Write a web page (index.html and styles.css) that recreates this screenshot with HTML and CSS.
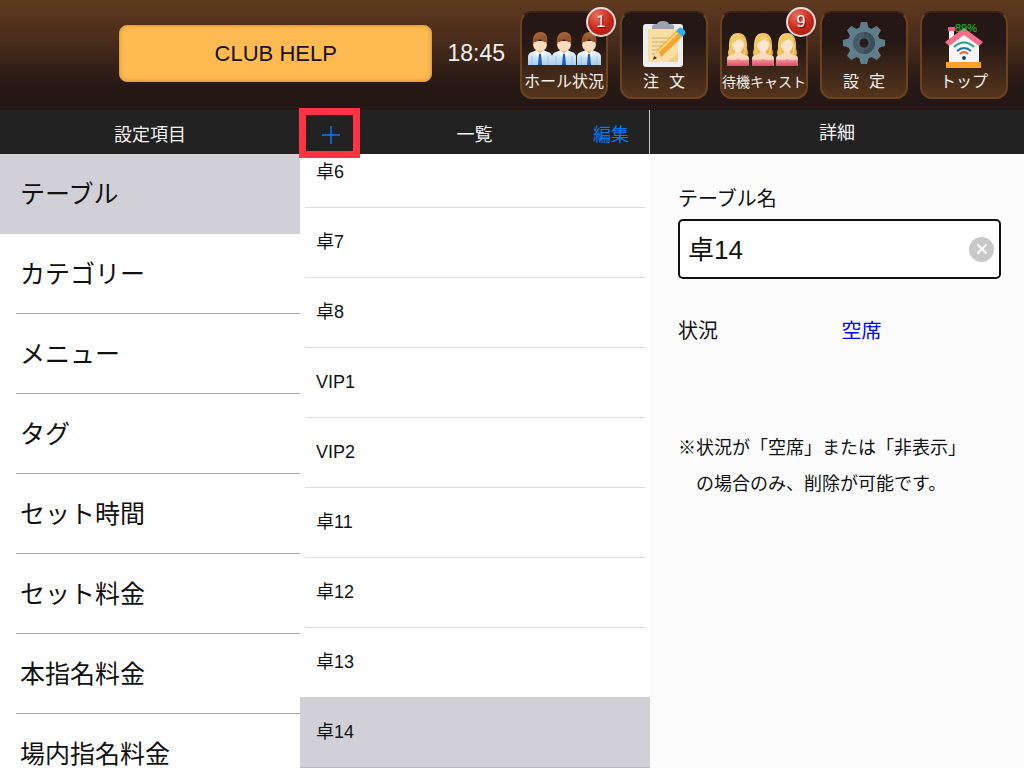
FILE: index.html
```html
<!DOCTYPE html>
<html lang="ja">
  <head>
    <meta charset="UTF-8" />
    <meta name="viewport" content="width=device-width, initial-scale=1.0" />
    <title>CLUB HELP 設定</title>
    <link rel="stylesheet" href="styles.css">
  </head>
  <body>
    <svg class="defs" aria-hidden="true">
      <defs>
        <linearGradient id="shirt" x1="0" y1="0" x2="0" y2="1">
          <stop offset="0" stop-color="#f4f9fd" />
          <stop offset="1" stop-color="#a9cdea" />
        </linearGradient>
        <linearGradient id="brownHair" x1="0" y1="0" x2="0" y2="1">
          <stop offset="0" stop-color="#a8683c" />
          <stop offset="1" stop-color="#7e4420" />
        </linearGradient>
        <linearGradient id="blondHair" x1="0" y1="0" x2="1" y2="1">
          <stop offset="0" stop-color="#f7d777" />
          <stop offset="1" stop-color="#dfa53c" />
        </linearGradient>
        <linearGradient id="dress" x1="0" y1="0" x2="0" y2="1">
          <stop offset="0" stop-color="#f59aa0" />
          <stop offset="1" stop-color="#dc4a62" />
        </linearGradient>
        <linearGradient id="pencil" x1="0" y1="0" x2="1" y2="1">
          <stop offset="0" stop-color="#ffc247" />
          <stop offset="1" stop-color="#f08a24" />
        </linearGradient>
        <symbol id="man" viewBox="0 0 24 33">
          <path d="M0 33v-8q0-4 4-5l5-2h6l5 2q4 1 4 5v8z" fill="url(#shirt)" />
          <path d="M9 15h6v4l-3 3-3-3z" fill="#eab991" />
          <path d="M8 18l4 4-3 3zM16 18l-4 4 3 3z" fill="#fff" />
          <path d="M11 22h2l1 11h-4z" fill="#1d5fb4" />
          <path d="M4 24v9M20 24v9" stroke="#8db6d9" stroke-width=".6" />
          <path d="M5 9h14v4q-1 6-7 6t-7-6z" fill="#fbdcbc" />
          <path d="M5 13Q4 10 5 6 7 0 12 0q6 0 7 5 1 4 0 8l-1-3q-4 0-6-3-2 3-6 3z" fill="url(#brownHair)" />
        </symbol>
        <symbol id="woman" viewBox="0 0 22 33">
          <path d="M2 23Q0 20 2 16 1 0 11 0t9 16q2 4 0 7l-5 1H7z" fill="url(#blondHair)" />
          <path d="M0 33v-7q0-4 4-4l4-2v-4h6v4l4 2q4 0 4 4v7z" fill="#fbd9bf" />
          <path d="M0 26q6 2 11 0 6 2 11 0v7H0z" fill="url(#dress)" />
          <path d="M5 9q1-6 6-6t6 6v4q-2 6-6 6t-6-6z" fill="#fde5cf" />
          <path d="M4 14Q3 2 11 2t7 12q-1-5-5-8-3 1-4 2-4 2-5 6z" fill="#f2ca63" />
          <path d="M4 11q-1 6 1 11M18 11q1 6-1 11" fill="none" stroke="#f2ca63" stroke-width="2" />
        </symbol>
      </defs>
    </svg>

    <div class="app">
      <header class="topbar">
        <button class="club-name" type="button">CLUB HELP</button>
        <time class="clock">18:45</time>

        <nav class="nav">
          <button class="nav-button" type="button">
            <svg class="nav-icon" viewBox="0 0 80 48">
              <use href="#man" x="4" y="12" width="24" height="33" />
              <use href="#man" x="28" y="12" width="24" height="33" />
              <use href="#man" x="53" y="12" width="24" height="33" />
            </svg>
            <span class="nav-label">ホール状況</span>
            <span class="badge">1</span>
          </button>

          <button class="nav-button" type="button">
            <svg class="nav-icon" viewBox="0 0 80 48">
              <rect x="19" y="4" width="40" height="43" rx="3" fill="#eceef1" />
              <rect x="24" y="9" width="30" height="33" fill="#f8dfa0" />
              <path d="M44 42h10V32z" fill="#efcf88" />
              <path d="M28 18h20M28 22h18M28 26h15M28 30h12M28 34h10" stroke="#b5a67c" stroke-width=".8" />
              <path d="M28 7q0-3 4-3h1q1-3 6-3t6 3h1q4 0 4 3v2H28z" fill="#9aa3af" />
              <path d="M29 39l3-8 20-20 6 6-21 20z" fill="url(#pencil)" />
              <path d="M33 33l20-20" stroke="#ffd773" stroke-width="2" />
              <path d="M52 11l3-3q1-1 3 0l3 3q1 2 0 3l-3 3z" fill="#2fb0e6" />
              <path d="M29 39l3-8q4 1 5 6z" fill="#f6d5a8" />
              <path d="M29 40l1-4 3 2z" fill="#3a2d2b" />
            </svg>
            <span class="nav-label spaced"><span>注</span><span>文</span></span>
          </button>

          <button class="nav-button" type="button">
            <svg class="nav-icon" viewBox="0 0 80 48">
              <use href="#woman" x="3" y="13" width="22" height="33" />
              <use href="#woman" x="28" y="13" width="22" height="33" />
              <use href="#woman" x="52" y="13" width="22" height="33" />
            </svg>
            <span class="nav-label small">待機キャスト</span>
            <span class="badge">9</span>
          </button>

          <button class="nav-button" type="button">
            <svg class="nav-icon" viewBox="0 0 80 48">
              <g transform="translate(40 23)" fill="#607d8b">
                <circle r="16" />
                <g id="teeth">
                  <path d="M-5-14l2-7h6l2 7zM-5 14l2 7h6l2-7z" />
                  <path d="M-14-5l-7 2v6l7 2zM14-5l7 2v6l-7 2z" />
                </g>
                <use href="#teeth" transform="rotate(45)" />
                <circle r="11" fill="#455a64" />
                <path d="M0-11a11 11 0 0 1 0 22z" fill="#3c4f59" />
                <circle r="7" fill="#546e7a" opacity=".35" />
                <circle r="4.5" fill="#2b1b17" />
              </g>
            </svg>
            <span class="nav-label spaced"><span>設</span><span>定</span></span>
          </button>

          <button class="nav-button" type="button">
            <svg class="nav-icon" viewBox="0 0 80 48">
              <path d="M25 9h5v14h-5z" fill="#f4f4f6" />
              <path d="M24 7h7v4h-7z" fill="#f0607c" />
              <path d="M25 42V24l15-13 15 13v18z" fill="#f6f6f8" />
              <path d="M40 8l19 14-4 4-15-11-15 11-4-4z" fill="#f76f8b" />
              <rect x="22" y="42" width="35" height="6" fill="#f9a12b" />
              <g fill="none" stroke-width="2">
                <path d="M30 27q10-9 20 0" stroke="#21a37c" />
                <path d="M33 31q7-6 14 0" stroke="#16799c" />
                <path d="M36 34q4-4 8 0" stroke="#f1672b" />
              </g>
              <circle cx="40" cy="38" r="2" fill="#174a66" />
              <text class="battery" x="31" y="12">89%</text>
            </svg>
            <span class="nav-label">トップ</span>
          </button>
        </nav>
      </header>

      <main class="columns">
        <section class="column">
          <div class="column-header">
            <h2>設定項目</h2>
          </div>
          <ul class="menu">
            <li class="menu-item selected">テーブル</li>
            <li class="menu-item">カテゴリー</li>
            <li class="menu-item">メニュー</li>
            <li class="menu-item">タグ</li>
            <li class="menu-item">セット時間</li>
            <li class="menu-item">セット料金</li>
            <li class="menu-item">本指名料金</li>
            <li class="menu-item">場内指名料金</li>
          </ul>
        </section>

        <section class="column">
          <div class="column-header list-header">
            <button class="add-button" type="button" aria-label="追加">
              <svg width="18" height="18" viewBox="0 0 18 18">
                <path d="M9 0v18M0 9h18" stroke="currentColor" stroke-width="1.5" />
              </svg>
            </button>
            <h2>一覧</h2>
            <button class="edit-button" type="button">編集</button>
          </div>
          <div class="list-view">
            <ul class="list">
              <li class="list-item">卓6</li>
              <li class="list-item">卓7</li>
              <li class="list-item">卓8</li>
              <li class="list-item">VIP1</li>
              <li class="list-item">VIP2</li>
              <li class="list-item">卓11</li>
              <li class="list-item">卓12</li>
              <li class="list-item">卓13</li>
              <li class="list-item selected">卓14</li>
            </ul>
          </div>
        </section>

        <section class="column detail">
          <div class="column-header detail-header">
            <h2>詳細</h2>
          </div>
          <form class="detail-form">
            <label for="tableName">テーブル名</label>
            <div class="name-field">
              <input id="tableName" type="text" value="卓14" />
              <button class="clear-button" type="button" aria-label="クリア">
                <svg width="12" height="12" viewBox="0 0 12 12">
                  <path d="M2 2l8 8M10 2L2 10" stroke="currentColor" stroke-width="2" stroke-linecap="round" />
                </svg>
              </button>
            </div>
            <div class="status">
              <span>状況</span>
              <span class="status-value">空席</span>
            </div>
            <p class="note">※状況が「空席」または「非表示」<br />　の場合のみ、削除が可能です。</p>
          </form>
        </section>
      </main>
    </div>
  </body>
</html>
```
FILE: styles.css
```css
* {
  margin: 0;
  padding: 0;
  box-sizing: border-box;
}

body {
  font-family: "Liberation Sans", "Noto Sans CJK JP", sans-serif;
  font-size: 18px;
  color: #111;
  overflow: hidden;
}

button,
input {
  font: inherit;
  border: none;
  background: none;
}

button {
  cursor: pointer;
}

h2 {
  font-size: 18px;
  font-weight: normal;
}

ul {
  list-style: none;
}

.defs {
  position: absolute;
  width: 0;
  height: 0;
}

.app {
  display: flex;
  flex-direction: column;
  height: 100vh;
}

/* Top bar */
.topbar {
  display: flex;
  align-items: flex-start;
  gap: 15px;
  height: 110px;
  padding: 11px 16px 0 119px;
  background: linear-gradient(to bottom, #5f3a1e 0%, #4b2d1b 35%, #251815 78%, #231614 100%);
}

.club-name {
  flex: 1;
  height: 57px;
  margin-top: 14px;
  border: 1px solid #d9a24a;
  border-radius: 8px;
  background: #ffba52;
  box-shadow: inset 0 0 4px #d99a2c;
  color: #111;
  font-size: 22px;
}

.clock {
  margin-top: 14px;
  color: #f4f0ee;
  font-size: 23px;
  line-height: 57px;
}

.nav {
  display: flex;
  gap: 12px;
}

.nav-button {
  position: relative;
  display: flex;
  flex-direction: column;
  align-items: center;
  gap: 2px;
  width: 88px;
  height: 88px;
  padding-top: 7px;
  border: 2px solid #6b421f;
  border-top-color: #38231a;
  border-radius: 12px;
  background: linear-gradient(to bottom, #231614 0%, #261815 35%, #55351c 100%);
  color: #f4f0ee;
}

.nav-icon {
  width: 80px;
  height: 48px;
  flex: none;
}

.nav-label {
  font-size: 16px;
  line-height: 24px;
  white-space: nowrap;
}

.nav-label.small {
  font-size: 14px;
}

.nav-label.spaced {
  display: flex;
  gap: 10px;
}

.battery {
  fill: #1fc81f;
  font-size: 11px;
}

.badge {
  position: absolute;
  top: -6px;
  right: -10px;
  width: 30px;
  height: 30px;
  border: 2px solid #e9dcda;
  border-radius: 50%;
  background: radial-gradient(circle at 35% 25%, #e8705c, #c92a1c 50%, #9d150c);
  color: #fff;
  font-size: 16px;
  line-height: 26px;
  text-align: center;
  text-shadow: 1px 1px 1px #500;
}

/* Columns */
.columns {
  flex: 1;
  display: grid;
  grid-template-columns: 300px 350px 1fr;
  min-height: 0;
}

.column {
  display: flex;
  flex-direction: column;
  min-width: 0;
  min-height: 0;
  background: #fff;
}

.column-header {
  flex: none;
  display: flex;
  align-items: center;
  justify-content: center;
  height: 44px;
  padding-top: 2px;
  background: #222;
  color: #f2f2f2;
}

.list-header {
  display: grid;
  grid-template-columns: 1fr auto 1fr;
  padding-right: 20px;
  padding-left: 20px;
  border-right: 1px solid #ccc;
}

.add-button,
.edit-button {
  color: #0a78f0;
}

.add-button {
  position: relative;
  justify-self: start;
  display: flex;
  padding: 4px 2px 0;
}

/* Frame around the add button */
.add-button::after {
  content: "";
  position: absolute;
  inset: -14px -18px -14px -21px;
  border: 7px solid #ff3344;
}

.edit-button {
  justify-self: end;
}

.detail-header {
  padding: 0 0 2px;
}

.menu,
.list-view {
  flex: 1;
  min-height: 0;
  overflow: hidden;
}

.menu-item {
  display: flex;
  align-items: center;
  height: 80px;
  margin-left: 16px;
  padding: 0 0 4px 4px;
  border-bottom: 1px solid #aaa;
  font-size: 25px;
}

.menu-item.selected {
  margin-left: 0;
  padding-left: 20px;
  border-color: #d1d0d7;
  background: #d1d0d7;
}

/* Scrolled slightly past the top of the first row */
.list {
  margin-top: -16px;
}

.list-item {
  display: flex;
  align-items: center;
  height: 70px;
  margin: 0 5px;
  padding: 0 0 2px 11px;
  border-bottom: 1px solid #ddd;
  line-height: 26px;
}

.list-item.selected {
  height: 71px;
  margin: -1px 0 0;
  padding: 0 0 0 16px;
  border-color: #bbb;
  background: #d1d0d7;
}

/* Detail */
.detail {
  background: #fbfbfb;
}

.detail-form {
  display: flex;
  flex-direction: column;
  padding: 30px 23px 0 28px;
}

.detail-form label,
.status {
  font-size: 20px;
  line-height: 30px;
}

.name-field {
  display: flex;
  align-items: center;
  height: 60px;
  margin-top: 5px;
  padding: 0 5px 0 8px;
  border: 2px solid #111;
  border-radius: 5px;
  background: #fff;
}

.name-field input {
  flex: 1;
  min-width: 0;
  padding-bottom: 4px;
  color: #111;
  font-size: 26px;
  outline: none;
}

.clear-button {
  display: flex;
  align-items: center;
  justify-content: center;
  width: 25px;
  height: 25px;
  border-radius: 50%;
  background: #c8c8c8;
  color: #fff;
}

.status {
  display: grid;
  grid-template-columns: 1fr 1fr;
  column-gap: 4px;
  margin-top: 37px;
}

.status-value {
  color: #00f;
}

.note {
  margin-top: 84px;
  line-height: 36px;
  white-space: nowrap;
}
```
